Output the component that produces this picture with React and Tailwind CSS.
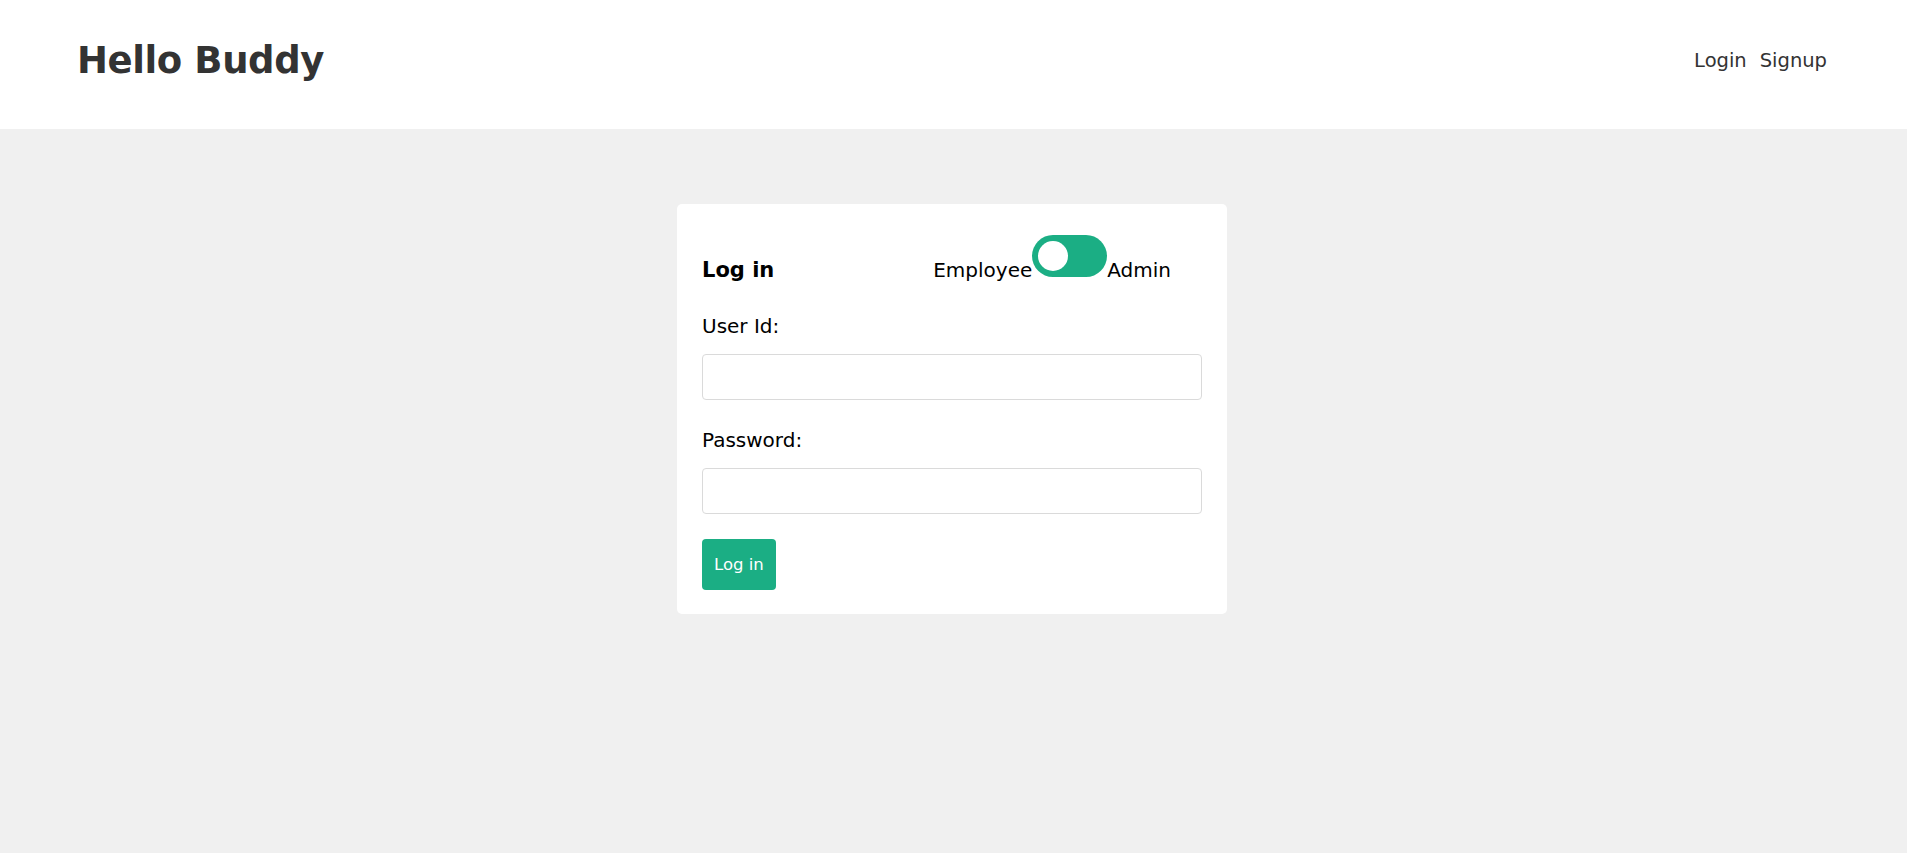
import { useState } from "react";

const font = { fontFamily: '"DejaVu Sans", "Liberation Sans", sans-serif' };

function RoleToggle() {
  const [admin, setAdmin] = useState(false);
  return (
    <div className="flex items-baseline ml-auto mr-[31px] text-[20px] leading-[30px] text-black">
      <span>Employee</span>
      <button
        onClick={() => setAdmin(a => !a)}
        className="relative w-[75px] h-[42px] rounded-full bg-[#1bae84] flex-shrink-0"
      >
        <span
          className={`absolute top-[6px] w-[30px] h-[30px] rounded-full bg-white transition-all ${
            admin ? "left-[39px]" : "left-[6px]"
          }`}
        />
      </button>
      <span>Admin</span>
    </div>
  );
}

export default function App() {
  return (
    <div className="min-h-screen bg-[#f0f0f0]" style={font}>
      {/* Top bar */}
      <header className="h-[129px] bg-white flex items-center justify-between pl-[77px] pr-[80px] pb-[8px]">
        <h1 className="text-[37px] font-bold text-[#333333] tracking-[-0.4px]">Hello Buddy</h1>
        <nav className="flex items-center gap-[13px] text-[19.5px] text-[#333333]">
          <a href="#">Login</a>
          <a href="#">Signup</a>
        </nav>
      </header>

      {/* Login card */}
      <main className="flex justify-center pt-[75px] pb-10 pr-[3px]">
        <div className="w-[550px] bg-white rounded-[5px] px-[25px] pt-[31px] pb-[24px]">
          <div className="flex items-baseline mb-[26px]">
            <h2 className="text-[21px] font-bold text-black leading-[30px]">Log in</h2>
            <RoleToggle />
          </div>

          <label className="block text-[20px] leading-[30px] text-black">User Id:</label>
          <input
            type="text"
            className="mt-[13px] block w-full h-[46px] border border-[#dadada] rounded-[4px] px-3 text-[18px] focus:outline-none"
          />

          <label className="block mt-[25px] text-[20px] leading-[30px] text-black">Password:</label>
          <input
            type="password"
            className="mt-[13px] block w-full h-[46px] border border-[#dadada] rounded-[4px] px-3 text-[18px] focus:outline-none"
          />

          <button className="mt-[25px] h-[51px] px-[12px] pt-[2px] bg-[#1bae84] text-white text-[16.5px] rounded-[4px]">
            Log in
          </button>
        </div>
      </main>
    </div>
  );
}
